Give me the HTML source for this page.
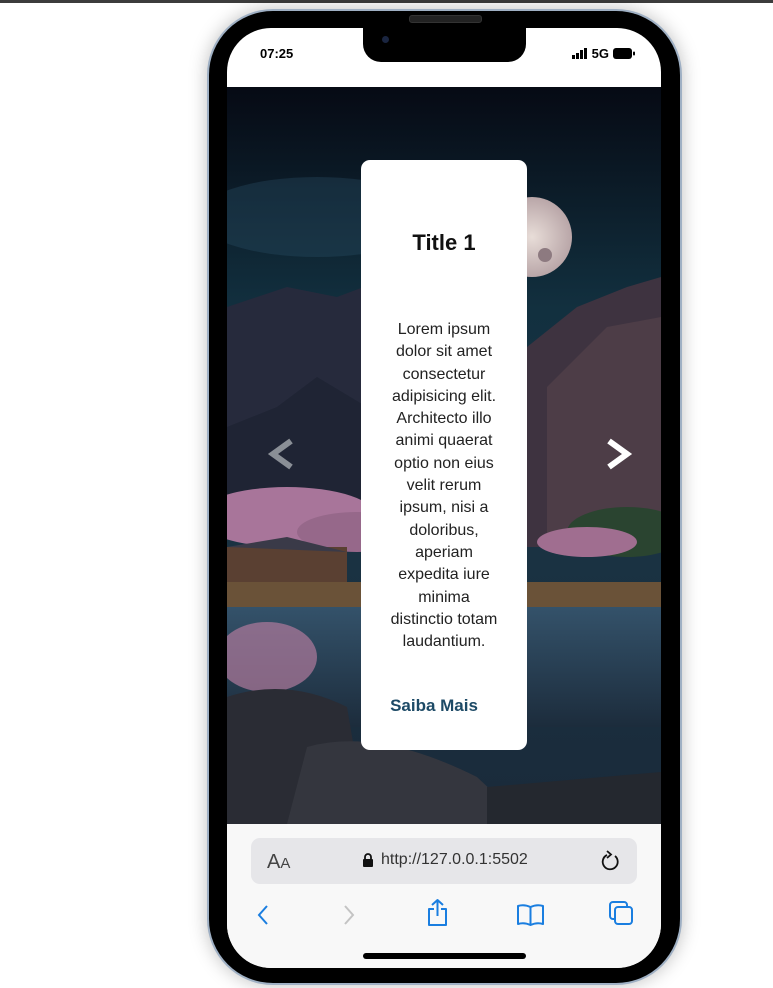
<!DOCTYPE html>
<html><head><meta charset="utf-8"><style>
html,body{margin:0;padding:0;width:773px;height:988px;background:#fff;overflow:hidden;font-family:"Liberation Sans",sans-serif}
.topbar{position:absolute;left:0;top:0;width:773px;height:3px;background:#3c3c3c}
.phone{position:absolute;left:207px;top:9px;width:475px;height:976px;border-radius:66px;background:#9fb0c4;box-shadow:0 0 18px rgba(0,0,0,.25)}
.phone2{position:absolute;left:209px;top:11px;width:471px;height:972px;border-radius:64px;background:#000}
.screen{position:absolute;left:227px;top:28px;width:434px;height:940px;border-radius:44px;overflow:hidden;background:#fff}
.notch{position:absolute;left:363px;top:28px;width:163px;height:34px;background:#000;border-radius:0 0 18px 18px}
.speaker{position:absolute;left:409px;top:15px;width:71px;height:6px;border-radius:3px;background:#222;border:1px solid #333}
.cam{position:absolute;left:382px;top:36px;width:7px;height:7px;border-radius:50%;background:#1a2540}
.time{position:absolute;left:260px;top:46px;font-size:13px;font-weight:bold;color:#000}
.sb{position:absolute;left:572px;top:46px;font-size:13px;font-weight:bold}
.card{position:absolute;left:361px;top:160px;width:166px;height:590px;background:#fff;border-radius:9px;text-align:center}
.card h1{margin:0;position:absolute;top:70px;width:100%;font-size:22px;font-weight:bold;color:#111}
.card p{margin:0;position:absolute;top:159px;left:0;width:100%;font-size:16px;line-height:22.3px;color:#222}
.card a{position:absolute;top:536px;left:0;width:100%;font-size:17px;font-weight:bold;color:#1d4a66;margin-left:-10px}
.bbar{position:absolute;left:0;top:796px;width:434px;height:144px;background:#f8f8f8}
.url{position:absolute;left:251px;top:838px;width:386px;height:46px;background:#e6e6e9;border-radius:9px}
.home{position:absolute;left:363px;top:953px;width:163px;height:6px;border-radius:3px;background:#000}
</style></head><body>
<div class="topbar"></div>
<div class="phone"></div><div class="phone2"></div>
<div class="screen">
<svg style="position:absolute;left:0;top:59px" width="434" height="737" viewBox="0 0 434 737">
<defs>
<linearGradient id="sky" x1="0" y1="0" x2="0" y2="1"><stop offset="0" stop-color="#060a14"/><stop offset=".3" stop-color="#12303f"/><stop offset=".55" stop-color="#1a3444"/><stop offset="1" stop-color="#1a2a3a"/></linearGradient>
<radialGradient id="moon"><stop offset="0" stop-color="#e8ddd8"/><stop offset="1" stop-color="#b9a6a8"/></radialGradient>
<linearGradient id="water" x1="0" y1="0" x2="0" y2="1"><stop offset="0" stop-color="#34526a"/><stop offset="1" stop-color="#1c2c3c"/></linearGradient>
</defs>
<rect width="434" height="737" fill="url(#sky)"/>
<ellipse cx="90" cy="130" rx="120" ry="40" fill="#2a5066" opacity=".35"/>
<circle cx="305" cy="150" r="40" fill="url(#moon)"/>
<circle cx="292" cy="140" r="8" fill="#8d7a80"/><circle cx="318" cy="168" r="7" fill="#8d7a80"/>
<path d="M0 220 L60 200 L110 210 L150 195 L200 215 L200 400 L0 400Z" fill="#262a3c"/>
<path d="M0 340 L50 320 L90 290 L140 320 L200 330 L200 420 L0 420Z" fill="#1f2434"/>
<path d="M300 260 L350 220 L400 200 L434 190 L434 460 L300 460Z" fill="#3e3340"/>
<path d="M320 300 L380 240 L434 230 L434 460 L320 460Z" fill="#54414a" opacity=".7"/>
<ellipse cx="60" cy="430" rx="90" ry="30" fill="#a8759a"/>
<ellipse cx="130" cy="445" rx="60" ry="20" fill="#96688a"/>
<rect x="0" y="460" width="120" height="35" fill="#5a4032"/>
<path d="M0 460 L60 450 L120 465Z" fill="#3a3a48"/>
<ellipse cx="400" cy="445" rx="60" ry="25" fill="#2a4430"/>
<ellipse cx="360" cy="455" rx="50" ry="15" fill="#a06e90"/>
<rect x="0" y="495" width="434" height="30" fill="#6a5238"/>
<rect x="0" y="520" width="434" height="120" fill="url(#water)"/>
<ellipse cx="40" cy="570" rx="50" ry="35" fill="#b07a9c" opacity=".7"/>
<path d="M0 610 Q60 590 120 620 L140 737 L0 737Z" fill="#2a2c34"/>
<path d="M80 660 Q150 640 250 690 L300 737 L60 737Z" fill="#34363e"/>
<path d="M260 700 L434 685 L434 737 L260 737Z" fill="#24282f"/>
</svg>
<svg style="position:absolute;left:40px;top:410px" width="28" height="32" viewBox="0 0 28 32"><path d="M24 3 L6 16 L24 29" fill="none" stroke="#8a8f96" stroke-width="6"/></svg>
<svg style="position:absolute;left:378px;top:410px" width="28" height="32" viewBox="0 0 28 32"><path d="M4 3 L22 16 L4 29" fill="none" stroke="#fff" stroke-width="6"/></svg>
<div class="bbar"></div>
</div>
<div class="notch"></div><div class="speaker"></div><div class="cam"></div>
<div class="time">07:25</div>
<div class="sb"><svg width="16" height="11" style="vertical-align:-1px"><rect x="0" y="7" width="3" height="4"/><rect x="4" y="5" width="3" height="6"/><rect x="8" y="2" width="3" height="9"/><rect x="12" y="0" width="3" height="11"/></svg> 5G <svg width="22" height="11" style="vertical-align:-1px"><rect x="0" y="0" width="19" height="11" rx="3"/><rect x="20" y="3.5" width="2" height="4" rx="1"/></svg></div>
<div class="card"><h1>Title 1</h1><p>Lorem ipsum<br>dolor sit amet<br>consectetur<br>adipisicing elit.<br>Architecto illo<br>animi quaerat<br>optio non eius<br>velit rerum<br>ipsum, nisi a<br>doloribus,<br>aperiam<br>expedita iure<br>minima<br>distinctio totam<br>laudantium.</p><a>Saiba Mais</a></div>
<div class="url"></div>
<div style="position:absolute;left:267px;top:851px;font-size:20px;color:#444">A<span style="font-size:15px">A</span></div>
<svg style="position:absolute;left:362px;top:853px" width="12" height="15"><rect x="1" y="6" width="10" height="8" rx="1" fill="#111"/><path d="M3 6 V4 a3 3 0 0 1 6 0 V6" fill="none" stroke="#111" stroke-width="1.8"/></svg>
<div style="position:absolute;left:381px;top:851px;font-size:16px;color:#333">http://127.0.0.1:5502</div>
<svg style="position:absolute;left:600px;top:850px" width="21" height="22" viewBox="0 0 21 22"><path d="M15 6 A7.5 7.5 0 1 1 7 5" fill="none" stroke="#111" stroke-width="1.8"/><path d="M7 1 L11 4.5 L7 8" fill="none" stroke="#111" stroke-width="1.8"/></svg>
<svg style="position:absolute;left:256px;top:904px" width="14" height="22"><path d="M11 2 L3 11 L11 20" fill="none" stroke="#1a7ee0" stroke-width="2"/></svg>
<svg style="position:absolute;left:342px;top:904px" width="14" height="22"><path d="M3 2 L11 11 L3 20" fill="none" stroke="#c4c4c4" stroke-width="2"/></svg>
<svg style="position:absolute;left:426px;top:898px" width="23" height="30"><path d="M11.5 2 V18 M6 7 L11.5 2 L17 7 M8 11 H3 V27 H20 V11 H15" fill="none" stroke="#1a7ee0" stroke-width="2" stroke-linejoin="round"/></svg>
<svg style="position:absolute;left:516px;top:903px" width="29" height="24"><path d="M14.5 4 Q8 1 2 3 V21 Q8 19 14.5 22 Q21 19 27 21 V3 Q21 1 14.5 4 Z M14.5 4 V22" fill="none" stroke="#1a7ee0" stroke-width="2" stroke-linejoin="round"/></svg>
<svg style="position:absolute;left:608px;top:900px" width="27" height="27"><rect x="2" y="2" width="17" height="17" rx="3" fill="none" stroke="#1a7ee0" stroke-width="2"/><rect x="7" y="7" width="17" height="17" rx="3" fill="#f8f8f8" stroke="#1a7ee0" stroke-width="2"/></svg>
<div class="home"></div>
</body></html>
